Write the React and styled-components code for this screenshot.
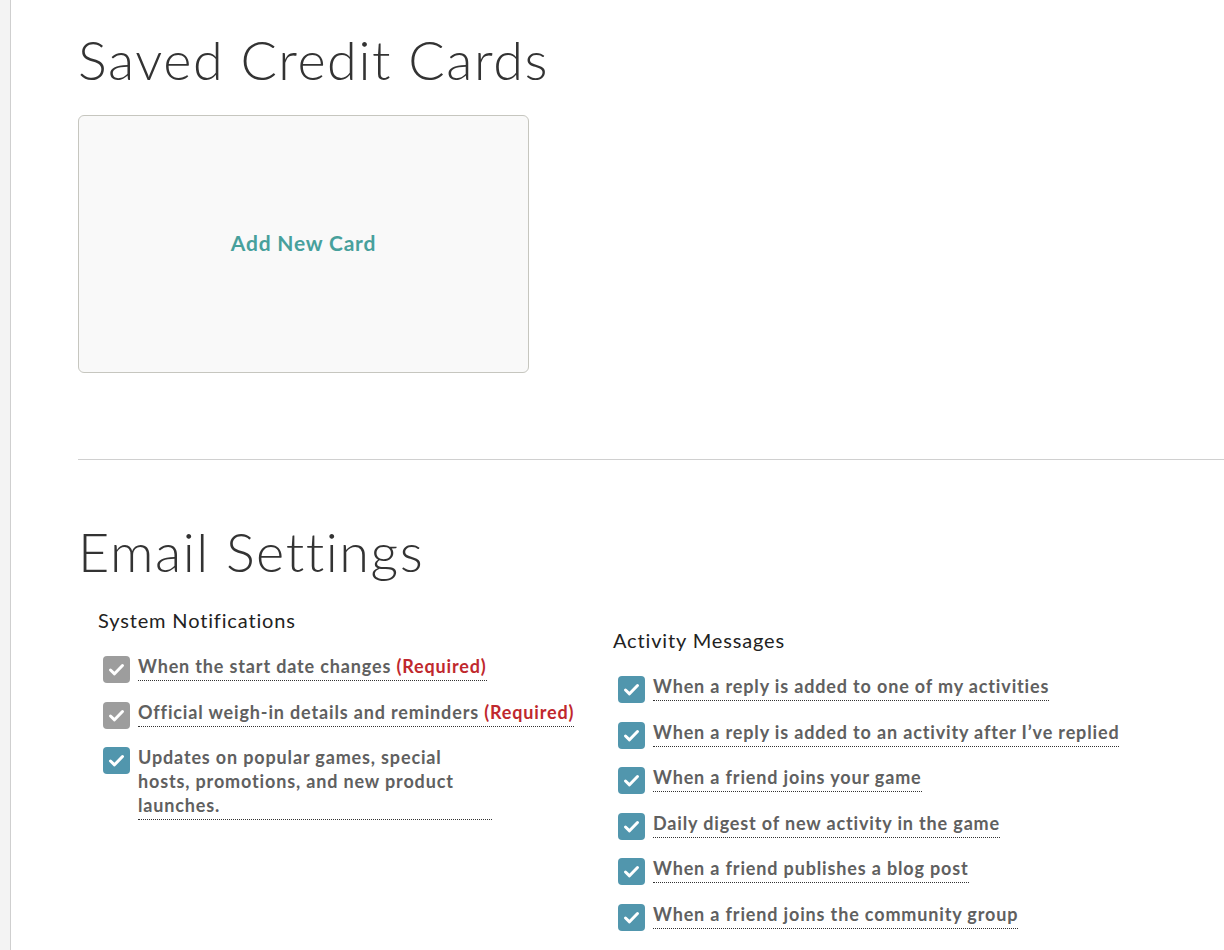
import React from "react";
import styled, { createGlobalStyle } from "styled-components";

const GlobalStyle = createGlobalStyle`
  html, body { margin: 0; padding: 0; background: #ffffff; }
  body { font-family: Lato, "Open Sans", sans-serif; color: #333; }
  * { box-sizing: border-box; }
`;

const Page = styled.div`
  display: flex;
  min-height: 950px;
`;

const SideStrip = styled.div`
  width: 11px;
  flex: none;
  background: #f3f3f3;
  border-right: 1px solid #cfcfcf;
`;

const Main = styled.main`
  flex: 1;
  padding: 27px 0 0 67px;
`;

const SectionTitle = styled.h1`
  margin: 0;
  font-family: Lato, sans-serif;
  font-weight: 300;
  font-size: 54px;
  line-height: 65px;
  color: #333;
  letter-spacing: 1.55px;
`;

const AddCard = styled.button`
  display: flex;
  align-items: center;
  justify-content: center;
  width: 451px;
  height: 258px;
  margin-top: 23px;
  background: #f9f9f9;
  border: 1px solid #c6c6bf;
  border-radius: 6px;
  font-family: Lato, sans-serif;
  font-weight: 700;
  font-size: 21px;
  letter-spacing: 0.8px;
  color: #47a09c;
  cursor: pointer;
  padding: 0 0 4px 0;
`;

const Divider = styled.hr`
  margin: 86px 0 0 0;
  border: none;
  border-top: 1px solid #d0d0d0;
  height: 0;
`;

const EmailTitle = styled(SectionTitle)`
  margin-top: 59px;
`;

const Columns = styled.div`
  display: grid;
  grid-template-columns: 515px 1fr;
  padding-left: 20px;
  margin-top: 24px;
`;

const Column = styled.section`
  display: flex;
  flex-direction: column;
  padding-top: ${(p) => p.$offset || 0}px;
`;

const GroupTitle = styled.h2`
  margin: 0 0 22px 0;
  font-family: Lato, sans-serif;
  font-weight: 400;
  font-size: 20px;
  line-height: 24px;
  letter-spacing: 0.85px;
  color: #222;
`;

const OptionList = styled.ul`
  list-style: none;
  margin: 0;
  padding: 0;
  display: flex;
  flex-direction: column;
  gap: 16.5px;
`;

const Option = styled.li`
  display: flex;
  align-items: flex-start;
  gap: 8px;
  padding-left: 5px;
`;

const Box = styled.span`
  flex: none;
  width: 27px;
  height: 27px;
  margin-top: 2px;
  border-radius: 4px;
  background: ${(p) => (p.$locked ? "#9d9d9d" : "#5196ad")};
  display: flex;
  align-items: center;
  justify-content: center;
`;

const Label = styled.span`
  font-family: Lato, sans-serif;
  font-weight: 700;
  font-size: 18px;
  line-height: 24px;
  letter-spacing: 0.85px;
  color: #606060;
  padding-bottom: 2px;
  border-bottom: 1px dotted #333;
  width: ${(p) => (p.$wide ? "354px" : "auto")};
`;

const Required = styled.span`
  color: #c0282d;
`;

const Check = () => (
  <svg width="27" height="27" viewBox="0 0 27 27" aria-hidden="true">
    <path
      d="M7.5 14 L11.5 17.8 L19.5 9.5"
      fill="none"
      stroke="#fff"
      strokeWidth="3"
      strokeLinecap="round"
      strokeLinejoin="round"
    />
  </svg>
);

const CheckOption = ({ locked, wide, children }) => (
  <Option>
    <Box $locked={locked}>
      <Check />
    </Box>
    <Label $wide={wide}>{children}</Label>
  </Option>
);

const activity = [
  "When a reply is added to one of my activities",
  "When a reply is added to an activity after I’ve replied",
  "When a friend joins your game",
  "Daily digest of new activity in the game",
  "When a friend publishes a blog post",
  "When a friend joins the community group",
];

export default function App() {
  return (
    <>
      <GlobalStyle />
      <Page>
        <SideStrip />
        <Main>
          <SectionTitle>Saved Credit Cards</SectionTitle>
          <AddCard type="button">Add New Card</AddCard>
          <Divider />
          <EmailTitle>Email Settings</EmailTitle>
          <Columns>
            <Column>
              <GroupTitle>System Notifications</GroupTitle>
              <OptionList>
                <CheckOption locked>
                  When the start date changes <Required>(Required)</Required>
                </CheckOption>
                <CheckOption locked>
                  Official weigh-in details and reminders <Required>(Required)</Required>
                </CheckOption>
                <CheckOption wide>
                  Updates on popular games, special hosts, promotions, and new product launches.
                </CheckOption>
              </OptionList>
            </Column>
            <Column $offset={20}>
              <GroupTitle>Activity Messages</GroupTitle>
              <OptionList>
                {activity.map((t) => (
                  <CheckOption key={t}>{t}</CheckOption>
                ))}
              </OptionList>
            </Column>
          </Columns>
        </Main>
      </Page>
    </>
  );
}
